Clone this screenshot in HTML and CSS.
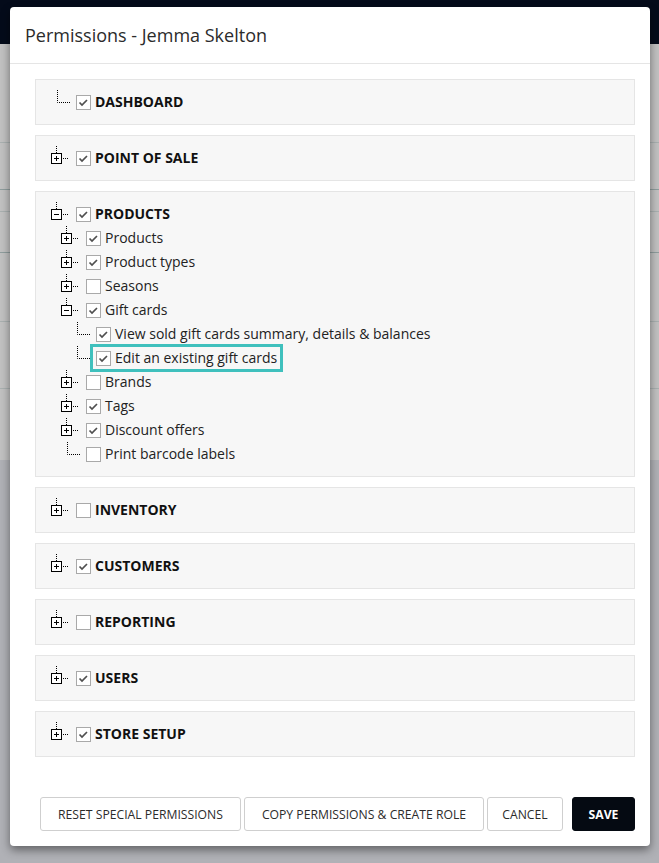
FILE: index.html
```html
<!DOCTYPE html>
<html>
<head>
<meta charset="utf-8">
<link rel="stylesheet" href="styles.css">
</head>
<body>
<div class="page">
  <div class="topbar"></div>
  <div class="bg-row h1"></div>
  <div class="bg-row h2 dark"></div>
  <div class="bg-row h3"></div>
  <div class="bg-row h4 dark"></div>
  <div class="bg-row h5"></div>
  <div class="bg-row h6"></div>
  <div class="bg-row h7 last"></div>
  <div class="bg-rest"></div>
</div>

<div class="modal">
  <div class="modal-header">Permissions - Jemma Skelton</div>
  <div class="modal-body">

    <div class="panel">
      <div class="row top">
        <svg class="conn" width="25" height="24"><path d="M6.5 0V12.5H20" class="dot"/></svg>
        <span class="item"><svg class="cb" width="15" height="15"><rect x=".5" y=".5" width="14" height="14"/><path d="M3.5 7.5l2.5 2.5 5-5" class="tick"/></svg><span class="lbl">DASHBOARD</span></span>
      </div>
    </div>

    <div class="panel">
      <div class="row top">
        <svg class="conn" width="25" height="24"><path d="M5.5 0V7M12 12.5H18" class="dot"/><rect x=".5" y="7.5" width="10" height="10" class="bx"/><path d="M3 12.5h5M5.5 10v5" class="sym"/></svg>
        <span class="item"><svg class="cb" width="15" height="15"><rect x=".5" y=".5" width="14" height="14"/><path d="M3.5 7.5l2.5 2.5 5-5" class="tick"/></svg><span class="lbl">POINT OF SALE</span></span>
      </div>
    </div>

    <div class="panel">
      <div class="row top">
        <svg class="conn" width="25" height="24"><path d="M5.5 0V7M12 12.5H18" class="dot"/><rect x=".5" y="7.5" width="10" height="10" class="bx"/><path d="M3 12.5h5" class="sym"/></svg>
        <span class="item"><svg class="cb" width="15" height="15"><rect x=".5" y=".5" width="14" height="14"/><path d="M3.5 7.5l2.5 2.5 5-5" class="tick"/></svg><span class="lbl">PRODUCTS</span></span>
      </div>
      <div class="row lvl1">
        <svg class="conn" width="25" height="24"><path d="M5.5 0V7M12 12.5H18" class="dot"/><rect x=".5" y="7.5" width="10" height="10" class="bx"/><path d="M3 12.5h5M5.5 10v5" class="sym"/></svg>
        <span class="item"><svg class="cb" width="15" height="15"><rect x=".5" y=".5" width="14" height="14"/><path d="M3.5 7.5l2.5 2.5 5-5" class="tick"/></svg><span class="lbl">Products</span></span>
      </div>
      <div class="row lvl1">
        <svg class="conn" width="25" height="24"><path d="M5.5 0V7M12 12.5H18" class="dot"/><rect x=".5" y="7.5" width="10" height="10" class="bx"/><path d="M3 12.5h5M5.5 10v5" class="sym"/></svg>
        <span class="item"><svg class="cb" width="15" height="15"><rect x=".5" y=".5" width="14" height="14"/><path d="M3.5 7.5l2.5 2.5 5-5" class="tick"/></svg><span class="lbl">Product types</span></span>
      </div>
      <div class="row lvl1">
        <svg class="conn" width="25" height="24"><path d="M5.5 0V7M12 12.5H18" class="dot"/><rect x=".5" y="7.5" width="10" height="10" class="bx"/><path d="M3 12.5h5M5.5 10v5" class="sym"/></svg>
        <span class="item"><svg class="cb" width="15" height="15"><rect x=".5" y=".5" width="14" height="14"/></svg><span class="lbl">Seasons</span></span>
      </div>
      <div class="row lvl1">
        <svg class="conn" width="25" height="24"><path d="M5.5 0V7M12 12.5H18" class="dot"/><rect x=".5" y="7.5" width="10" height="10" class="bx"/><path d="M3 12.5h5" class="sym"/></svg>
        <span class="item"><svg class="cb" width="15" height="15"><rect x=".5" y=".5" width="14" height="14"/><path d="M3.5 7.5l2.5 2.5 5-5" class="tick"/></svg><span class="lbl">Gift cards</span></span>
      </div>
      <div class="row lvl2">
        <svg class="conn" width="25" height="24"><path d="M6.5 0V12.5H20" class="dot"/></svg>
        <span class="item"><svg class="cb" width="15" height="15"><rect x=".5" y=".5" width="14" height="14"/><path d="M3.5 7.5l2.5 2.5 5-5" class="tick"/></svg><span class="lbl">View sold gift cards summary, details &amp; balances</span></span>
      </div>
      <div class="row lvl2">
        <svg class="conn" width="25" height="24"><path d="M6.5 0V12.5H20" class="dot"/></svg>
        <span class="item focus"><svg class="cb" width="15" height="15"><rect x=".5" y=".5" width="14" height="14"/><path d="M3.5 7.5l2.5 2.5 5-5" class="tick"/></svg><span class="lbl">Edit an existing gift cards</span></span>
      </div>
      <div class="row lvl1">
        <svg class="conn" width="25" height="24"><path d="M5.5 0V7M12 12.5H18" class="dot"/><rect x=".5" y="7.5" width="10" height="10" class="bx"/><path d="M3 12.5h5M5.5 10v5" class="sym"/></svg>
        <span class="item"><svg class="cb" width="15" height="15"><rect x=".5" y=".5" width="14" height="14"/></svg><span class="lbl">Brands</span></span>
      </div>
      <div class="row lvl1">
        <svg class="conn" width="25" height="24"><path d="M5.5 0V7M12 12.5H18" class="dot"/><rect x=".5" y="7.5" width="10" height="10" class="bx"/><path d="M3 12.5h5M5.5 10v5" class="sym"/></svg>
        <span class="item"><svg class="cb" width="15" height="15"><rect x=".5" y=".5" width="14" height="14"/><path d="M3.5 7.5l2.5 2.5 5-5" class="tick"/></svg><span class="lbl">Tags</span></span>
      </div>
      <div class="row lvl1">
        <svg class="conn" width="25" height="24"><path d="M5.5 0V7M12 12.5H18" class="dot"/><rect x=".5" y="7.5" width="10" height="10" class="bx"/><path d="M3 12.5h5M5.5 10v5" class="sym"/></svg>
        <span class="item"><svg class="cb" width="15" height="15"><rect x=".5" y=".5" width="14" height="14"/><path d="M3.5 7.5l2.5 2.5 5-5" class="tick"/></svg><span class="lbl">Discount offers</span></span>
      </div>
      <div class="row lvl1">
        <svg class="conn" width="25" height="24"><path d="M6.5 0V12.5H20" class="dot"/></svg>
        <span class="item"><svg class="cb" width="15" height="15"><rect x=".5" y=".5" width="14" height="14"/></svg><span class="lbl">Print barcode labels</span></span>
      </div>
    </div>

    <div class="panel">
      <div class="row top">
        <svg class="conn" width="25" height="24"><path d="M5.5 0V7M12 12.5H18" class="dot"/><rect x=".5" y="7.5" width="10" height="10" class="bx"/><path d="M3 12.5h5M5.5 10v5" class="sym"/></svg>
        <span class="item"><svg class="cb" width="15" height="15"><rect x=".5" y=".5" width="14" height="14"/></svg><span class="lbl">INVENTORY</span></span>
      </div>
    </div>

    <div class="panel">
      <div class="row top">
        <svg class="conn" width="25" height="24"><path d="M5.5 0V7M12 12.5H18" class="dot"/><rect x=".5" y="7.5" width="10" height="10" class="bx"/><path d="M3 12.5h5M5.5 10v5" class="sym"/></svg>
        <span class="item"><svg class="cb" width="15" height="15"><rect x=".5" y=".5" width="14" height="14"/><path d="M3.5 7.5l2.5 2.5 5-5" class="tick"/></svg><span class="lbl">CUSTOMERS</span></span>
      </div>
    </div>

    <div class="panel">
      <div class="row top">
        <svg class="conn" width="25" height="24"><path d="M5.5 0V7M12 12.5H18" class="dot"/><rect x=".5" y="7.5" width="10" height="10" class="bx"/><path d="M3 12.5h5M5.5 10v5" class="sym"/></svg>
        <span class="item"><svg class="cb" width="15" height="15"><rect x=".5" y=".5" width="14" height="14"/></svg><span class="lbl">REPORTING</span></span>
      </div>
    </div>

    <div class="panel">
      <div class="row top">
        <svg class="conn" width="25" height="24"><path d="M5.5 0V7M12 12.5H18" class="dot"/><rect x=".5" y="7.5" width="10" height="10" class="bx"/><path d="M3 12.5h5M5.5 10v5" class="sym"/></svg>
        <span class="item"><svg class="cb" width="15" height="15"><rect x=".5" y=".5" width="14" height="14"/><path d="M3.5 7.5l2.5 2.5 5-5" class="tick"/></svg><span class="lbl">USERS</span></span>
      </div>
    </div>

    <div class="panel">
      <div class="row top">
        <svg class="conn" width="25" height="24"><path d="M5.5 0V7M12 12.5H18" class="dot"/><rect x=".5" y="7.5" width="10" height="10" class="bx"/><path d="M3 12.5h5M5.5 10v5" class="sym"/></svg>
        <span class="item"><svg class="cb" width="15" height="15"><rect x=".5" y=".5" width="14" height="14"/><path d="M3.5 7.5l2.5 2.5 5-5" class="tick"/></svg><span class="lbl">STORE SETUP</span></span>
      </div>
    </div>

  </div>
  <div class="modal-footer">
    <button class="btn btn-reset">RESET SPECIAL PERMISSIONS</button>
    <button class="btn btn-copy">COPY PERMISSIONS &amp; CREATE ROLE</button>
    <button class="btn btn-cancel">CANCEL</button>
    <button class="btn btn-save">SAVE</button>
  </div>
</div>
</body>
</html>
```

FILE: styles.css
```css
* { box-sizing: border-box; }
html, body { margin: 0; padding: 0; }
body {
  width: 659px;
  height: 863px;
  overflow: hidden;
  position: relative;
  font-family: "Open Sans", "Liberation Sans", sans-serif;
  background: #b0b1b6;
}

/* background page under overlay */
.page { display: flex; flex-direction: column; height: 863px; }
.topbar { height: 44px; background: #040b1a; flex: none; }
.bg-row { background: #c1c1c1; border-bottom: 1px solid #a9b0b0; flex: none; }
.bg-row.dark { border-bottom-color: #8f9d9d; }
.bg-row.last { border-bottom: none; }
.h1 { height: 99px; }
.h2 { height: 47px; }
.h3 { height: 22px; }
.h4 { height: 41px; }
.h5 { height: 69px; }
.h6 { height: 67px; }
.h7 { height: 71px; }
.bg-rest { flex: 1; background: #b0b1b6; }

/* modal */
.modal {
  position: absolute;
  left: 10px;
  top: 7px;
  width: 640px;
  height: 839px;
  background: #fff;
  border-radius: 4px;
  box-shadow: 0 4px 10px rgba(0, 0, 0, 0.45);
  display: flex;
  flex-direction: column;
}
.modal-header {
  height: 57px;
  border-bottom: 1px solid #e5e5e5;
  padding: 14px 0 0 15px;
  font-size: 18px;
  color: #2b2b2b;
  line-height: 28px;
}
.modal-body {
  padding: 15px 15px 0 25px;
  display: flex;
  flex-direction: column;
  gap: 10px;
}
.panel {
  background: #f7f7f7;
  border: 1px solid #e5e5e5;
  padding: 10px 15px;
}
.row {
  display: flex;
  align-items: center;
  height: 24px;
  font-size: 14px;
  color: #222;
}
.row.top .lbl { font-weight: 700; color: #111; }
.row.lvl1 { padding-left: 10px; }
.row.lvl2 { padding-left: 20px; }
.conn { flex: none; display: block; }
.conn .dot { fill: none; stroke: #000; stroke-width: 1; stroke-dasharray: 1 1; }
.conn .bx { fill: #fff; stroke: #000; stroke-width: 1; }
.conn .sym { fill: none; stroke: #000; stroke-width: 1; }
.item {
  display: flex;
  align-items: center;
  gap: 4px;
  height: 16px;
}
.item.focus { outline: 3px solid #3fc0bd; outline-offset: 3px; }
.cb { flex: none; display: block; }
.cb rect { fill: #fff; stroke: #a9a9a9; stroke-width: 1; }
.cb .tick { fill: none; stroke: #4f4f4f; stroke-width: 1.7; }
.lbl { white-space: nowrap; line-height: 16px; }

/* footer */
.modal-footer {
  margin-top: auto;
  padding: 0 15px 15px 0;
  display: flex;
  justify-content: flex-end;
  gap: 3px;
}
.btn {
  height: 34px;
  border: 1px solid #cfcfcf;
  border-radius: 3px;
  background: #fff;
  font-family: "Open Sans", "Liberation Sans", sans-serif;
  font-size: 12.2px;
  color: #2b2b2b;
  padding: 0;
}
.btn-reset { width: 201px; }
.btn-copy { width: 240px; }
.btn-cancel { width: 76px; }
.btn-save {
  width: 63px;
  margin-left: 6px;
  background: #050a12;
  border-color: #050a12;
  color: #fff;
  font-weight: 700;
}
```
